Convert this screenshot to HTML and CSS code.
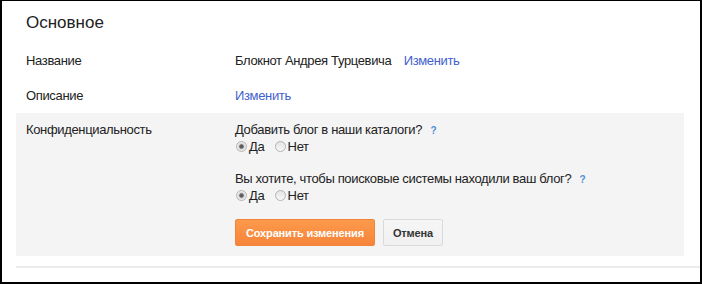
FILE: index.html
```html
<!DOCTYPE html>
<html lang="ru">
<head>
    <meta charset="UTF-8">
    <meta name="viewport" content="width=device-width, initial-scale=1.0">
    <title>Основное</title>
    <link rel="stylesheet" href="styles.css">
</head>
<body>
    <div class="frame">
        <h2 class="title">Основное</h2>

        <div class="section">
            <div class="row">
                <div class="label">Название</div>
                <div class="value">Блокнот Андрея Турцевича <a class="link edit" href="#">Изменить</a></div>
            </div>

            <div class="row">
                <div class="label">Описание</div>
                <div class="value"><a class="link" href="#">Изменить</a></div>
            </div>

            <div class="row row-shaded">
                <div class="label">Конфиденциальность</div>
                <div class="value">
                    <div class="question">Добавить блог в наши каталоги? <a class="help" href="#">?</a></div>
                    <div class="options">
                        <label class="opt"><input type="radio" name="catalog" checked>Да</label>
                        <label class="opt"><input type="radio" name="catalog">Нет</label>
                    </div>

                    <div class="question question-next">Вы хотите, чтобы поисковые системы находили ваш блог? <a class="help" href="#">?</a></div>
                    <div class="options">
                        <label class="opt"><input type="radio" name="search" checked>Да</label>
                        <label class="opt"><input type="radio" name="search">Нет</label>
                    </div>

                    <div class="actions">
                        <button class="btn btn-primary">Сохранить изменения</button>
                        <button class="btn btn-cancel">Отмена</button>
                    </div>
                </div>
            </div>

            <div class="divider"></div>
        </div>
    </div>
</body>
</html>
```

FILE: styles.css
```css
body {
    margin: 0;
    font-family: 'Liberation Sans', Arial, sans-serif;
    font-size: 13px;
    color: #222;
    background-color: #fff;
}

.frame {
    width: 702px;
    height: 284px;
    box-sizing: border-box;
    border-style: solid;
    border-color: #000;
    border-width: 1px 2px 2px 2px;
    padding-top: 11px;
    overflow: hidden;
}

.title {
    margin: 0 0 10px 24px;
    font-size: 17px;
    line-height: 22px;
    font-weight: normal;
    color: #222;
}

.section {
    margin-left: 14px;
}

.row {
    display: flex;
    padding: 9px 10px;
    line-height: 16px;
    letter-spacing: -0.35px;
}

.row:first-child {
    padding-bottom: 10px;
}

.label {
    width: 209px;
    flex-shrink: 0;
}

.value {
    flex: 1;
}

.link {
    color: #3f60ce;
    text-decoration: none;
}

.edit {
    margin-left: 9px;
}

.row-shaded {
    background-color: #f4f4f4;
    margin-right: 16px;
    padding-bottom: 10px;
}

.help {
    margin-left: 5px;
    font-size: 10px;
    font-weight: bold;
    color: #4d8fd8;
    text-decoration: none;
}

.question-next {
    margin-top: 16px;
}

.opt {
    cursor: pointer;
}

.opt + .opt {
    margin-left: 6px;
}

.opt input {
    -webkit-appearance: none;
    appearance: none;
    width: 11px;
    height: 11px;
    margin: 0 2px 0 1px;
    border: 1px solid #b4b4b4;
    border-radius: 50%;
    background: linear-gradient(#e4e4e4, #f8f8f8);
    vertical-align: -1px;
    box-sizing: border-box;
}

.opt input:checked {
    background: radial-gradient(circle, #5e5e5e 0, #5e5e5e 1.8px, #d6d6d6 2.6px, #efefef 4.5px);
}

.actions {
    display: flex;
    gap: 8px;
    margin-top: 15px;
    letter-spacing: 0;
}

.btn {
    height: 27px;
    font-family: inherit;
    font-size: 11px;
    font-weight: bold;
    letter-spacing: -0.15px;
    border-radius: 2px;
    cursor: pointer;
}

.btn-primary {
    padding: 0 10px;
    color: #fff;
    background: linear-gradient(#fd9a4c, #f6843a);
    border: 1px solid #f0843a;
}

.btn-cancel {
    padding: 0 9px;
    color: #333;
    background: linear-gradient(#f6f6f6, #f0f0f0);
    border: 1px solid #dadada;
}

.divider {
    height: 2px;
    margin-top: 10px;
    background-color: #ebebeb;
}
```
